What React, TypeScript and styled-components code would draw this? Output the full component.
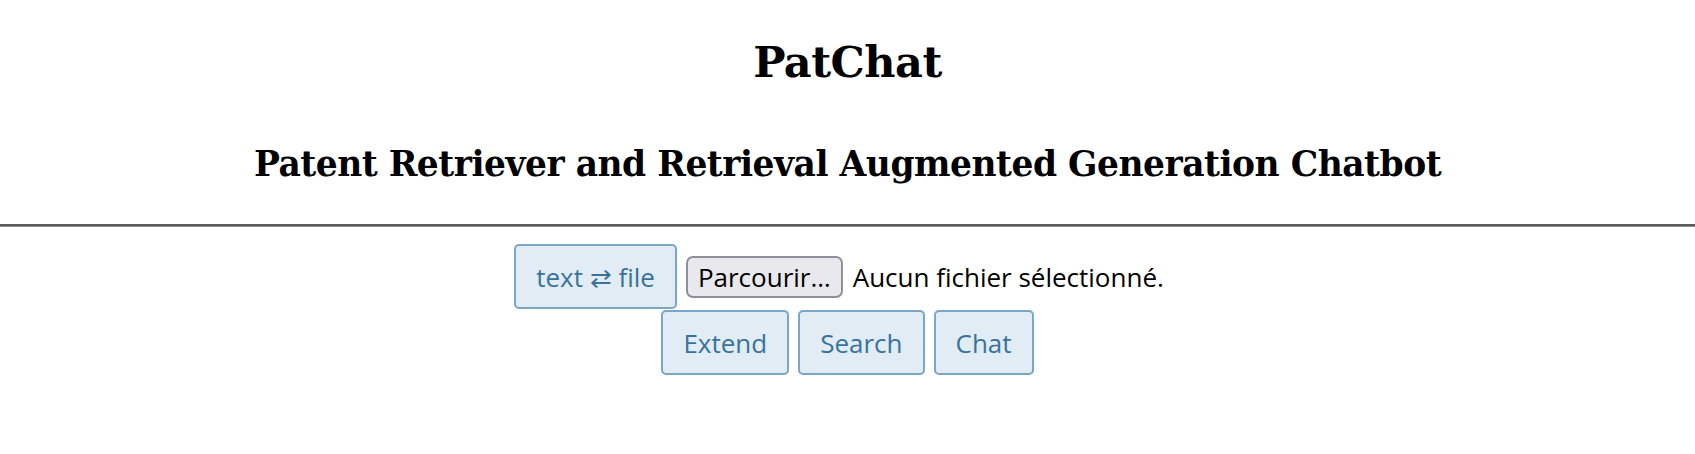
import React from "react";
import styled, { createGlobalStyle } from "styled-components";

const GlobalStyle = createGlobalStyle`
  html, body {
    margin: 0;
    padding: 0;
    background: #ffffff;
  }
  body {
    font-family: "Open Sans", "Noto Sans", sans-serif;
    color: #000;
  }
`;

const Header = styled.header`
  text-align: center;
  font-family: "DejaVu Serif", "Liberation Serif", serif;
  font-weight: bold;
`;

const Title = styled.h1`
  margin: 36px 0 0;
  font-size: 43px;
  line-height: 52px;
  font-weight: bold;
  letter-spacing: -0.5px;
`;

const Subtitle = styled.h2`
  margin: 55px 0 0;
  font-size: 34.5px;
  line-height: 42px;
  font-weight: bold;
  letter-spacing: -0.5px;
`;

const Rule = styled.hr`
  margin: 39px 0 0;
  height: 0;
  border: none;
  border-top: 2px solid #5a5a5a;
  border-bottom: 1px solid #8e8e8e;
`;

const Controls = styled.main`
  display: flex;
  flex-direction: column;
  align-items: center;
  gap: 1px;
  margin-top: 17px;
`;

const Row = styled.div`
  display: flex;
  justify-content: center;
  align-items: center;
  gap: 9px;
`;

const ActionButton = styled.button`
  box-sizing: border-box;
  height: 65px;
  padding: 0 20px;
  font-family: "Open Sans", "Noto Sans", sans-serif;
  font-size: 26px;
  color: #39739d;
  background: #e1ecf4;
  border: 2px solid #7aa7c7;
  border-radius: 5px;
  cursor: pointer;
`;

const FilePicker = styled.label`
  display: flex;
  align-items: center;
  gap: 10px;
  padding-right: 17px;
  font-size: 26px;
  color: #000;
  cursor: pointer;
`;

const HiddenInput = styled.input`
  display: none;
`;

const BrowseButton = styled.span`
  box-sizing: border-box;
  display: inline-flex;
  align-items: center;
  height: 42px;
  padding: 0 10px;
  background: #e9e9ed;
  border: 2px solid #8f8f9d;
  border-radius: 7px;
  color: #000;
`;

const FileName = styled.span`
  white-space: nowrap;
`;

export default function App() {
  return (
    <>
      <GlobalStyle />
      <Header>
        <Title>PatChat</Title>
        <Subtitle>Patent Retriever and Retrieval Augmented Generation Chatbot</Subtitle>
      </Header>
      <Rule />
      <Controls>
        <Row>
          <ActionButton>text ⇄ file</ActionButton>
          <FilePicker>
            <HiddenInput type="file" />
            <BrowseButton>Parcourir…</BrowseButton>
            <FileName>Aucun fichier sélectionné.</FileName>
          </FilePicker>
        </Row>
        <Row>
          <ActionButton>Extend</ActionButton>
          <ActionButton>Search</ActionButton>
          <ActionButton>Chat</ActionButton>
        </Row>
      </Controls>
    </>
  );
}
